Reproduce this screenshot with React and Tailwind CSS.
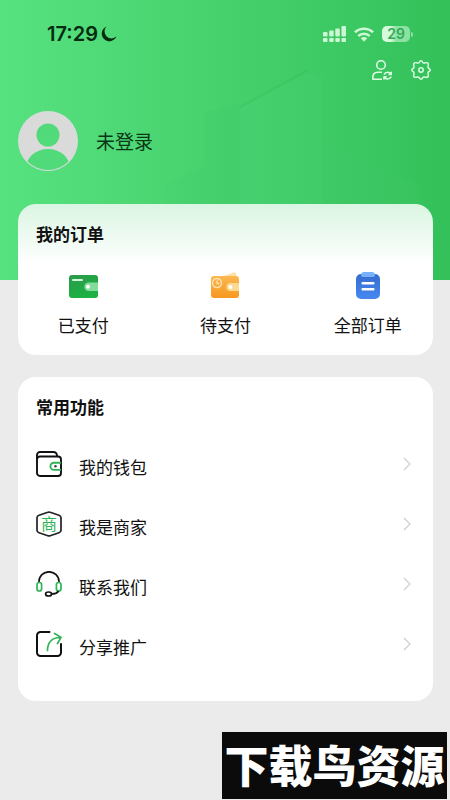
const orders = [
  { label: '已支付', icon: PaidIcon },
  { label: '待支付', icon: UnpaidIcon },
  { label: '全部订单', icon: AllOrdersIcon },
];

const features = [
  { label: '我的钱包', icon: WalletIcon },
  { label: '我是商家', icon: MerchantIcon },
  { label: '联系我们', icon: HeadsetIcon },
  { label: '分享推广', icon: ShareIcon },
];

function PaidIcon() {
  return (
    <svg viewBox="0 0 32 32" className="size-8" aria-hidden="true">
      <defs>
        <linearGradient id="paid" x1="0" y1="0" x2="0.4" y2="1">
          <stop offset="0" stopColor="#2c9a4b" />
          <stop offset="1" stopColor="#1cb142" />
        </linearGradient>
      </defs>
      <rect x="2" y="5" width="29" height="23" rx="3" fill="url(#paid)" />
      <rect x="5" y="9" width="11" height="2" rx="1" fill="#d5f5dd" />
      <path d="M31 12.500H21.500a4.200 4.200 0 0 0 0 8.400H31z" fill="#83dc9a" />
      <circle cx="21" cy="16.700" r="2" fill="#fff" />
    </svg>
  );
}

function UnpaidIcon() {
  return (
    <svg viewBox="0 0 32 32" className="size-8" aria-hidden="true">
      <defs>
        <linearGradient id="unpaid" x1="0" y1="0" x2="0" y2="1">
          <stop offset="0" stopColor="#fbb850" />
          <stop offset="1" stopColor="#f7971f" />
        </linearGradient>
      </defs>
      <path d="M12 7L24.500 2.500q2-.5 2.500 1.200L28 8z" fill="#fde0a6" />
      <rect x="2" y="6" width="28" height="22" rx="3" fill="url(#unpaid)" />
      <circle cx="8" cy="13" r="4.500" fill="none" stroke="#fde3b4" strokeWidth="1.400" />
      <path d="M8 10.500V13.500h2.500" fill="none" stroke="#fde3b4" strokeWidth="1.300" />
      <path d="M30 13H21.500a4 4 0 0 0 0 8H30z" fill="#fdd890" />
      <circle cx="21.500" cy="17" r="2" fill="#fff" />
    </svg>
  );
}

function AllOrdersIcon() {
  return (
    <svg viewBox="0 0 32 32" className="size-8" aria-hidden="true">
      <defs>
        <linearGradient id="all" x1="0" y1="0" x2="0" y2="1">
          <stop offset="0" stopColor="#356dd0" />
          <stop offset="1" stopColor="#4787f2" />
        </linearGradient>
      </defs>
      <rect x="4" y="4" width="24" height="25" rx="5" fill="url(#all)" />
      <path d="M9 5q0-3 3-3h8q3 0 3 3 0 2-2 2H11q-2 0-2-2z" fill="#77b1fa" />
      <rect x="9.500" y="12" width="13" height="2.400" rx="1" fill="#fff" />
      <rect x="9.500" y="18" width="13" height="2.400" rx="1" fill="#fff" />
    </svg>
  );
}

function WalletIcon() {
  return (
    <svg viewBox="0 0 26 26" className="size-[26px]" fill="none" strokeWidth="1.900" aria-hidden="true">
      <rect x="1" y="5.500" width="24" height="19.500" rx="3" stroke="#111" />
      <path d="M1 8.500V4a3 3 0 0 1 3-3H17.500a3.500 3.500 0 0 1 3.500 3.500V5.500" stroke="#111" />
      <path d="M25 11.700H18a3.600 3.600 0 0 0 0 7.200h7" stroke="#2fb457" />
      <circle cx="19.500" cy="15.300" r="1.200" fill="#2a4a33" />
    </svg>
  );
}

function MerchantIcon() {
  return (
    <svg viewBox="0 0 26 26" className="size-[26px]" aria-hidden="true">
      <path
        d="M11.800 1.300q1.200-.5 2.400 0l8.800 2.900q2 .7 2 2.600V19.200q0 1.900-2 2.600l-8.800 2.900q-1.200.5-2.400 0L3 21.800q-2-.7-2-2.600V6.800Q1 4.900 3 4.200z"
        fill="none"
        stroke="#222"
        strokeWidth="1.700"
      />
      <text x="13" y="19" textAnchor="middle" fontSize="16" fill="#2fb457" className="font-['Noto_Sans_CJK_SC',sans-serif]">商</text>
    </svg>
  );
}

function HeadsetIcon() {
  return (
    <svg viewBox="0 0 26 26" className="size-[26px]" fill="none" strokeWidth="1.700" aria-hidden="true">
      <path d="M3 12V10.500a10 9.700 0 0 1 20 0V12" stroke="#111" />
      <rect x="1" y="11.500" width="4.600" height="8.500" rx="2.300" stroke="#2fb457" />
      <rect x="20.400" y="11.500" width="4.600" height="8.500" rx="2.300" stroke="#2fb457" />
      <path d="M22.500 20q-1.500 3-7 3" stroke="#111" />
      <ellipse cx="12.600" cy="23" rx="3" ry="2" stroke="#111" />
    </svg>
  );
}

function ShareIcon() {
  return (
    <svg viewBox="0 0 26 26" className="size-[26px]" fill="none" strokeWidth="2" strokeLinecap="round" aria-hidden="true">
      <path d="M13.500 1H4.500A3.500 3.500 0 0 0 1 4.500v17A3.500 3.500 0 0 0 4.500 25h17a3.500 3.500 0 0 0 3.500-3.500V13" stroke="#111" />
      <path d="M11.500 19.500C11.500 11.500 16 6.500 24 6.500M18.500 2.500L25 6.300 21.500 12.500" stroke="#2fb457" strokeWidth="1.700" />
    </svg>
  );
}

function StatusBar() {
  return (
    <div className="flex h-12 items-end justify-between pr-[37px] pl-[47px] text-[#062b10]">
      <div className="flex h-7 items-center gap-[3px]">
        <span className="font-[Inter,sans-serif] text-[20px] font-semibold">17:29</span>
        <svg viewBox="0 0 16 16" className="size-4" aria-hidden="true">
          <path d="M5.500 .6a7.600 7.600 0 1 0 10 9.700A6.300 6.300 0 0 1 5.500 .6z" fill="currentColor" />
        </svg>
      </div>
      <div className="flex h-7 items-center gap-2 text-[#cdf7d5]">
        <svg viewBox="0 0 23 16" className="h-4 w-[23px]" fill="currentColor" aria-hidden="true">
          <rect x="0" y="6" width="4.500" height="4.500" rx="1" />
          <rect x="6.200" y="4.500" width="4.500" height="6" rx="1" />
          <rect x="12.300" y="2.500" width="4.500" height="8" rx="1" />
          <rect x="18.500" y="0" width="4.500" height="10.500" rx="1" />
          <rect x="0" y="12" width="4.500" height="4" rx="1" />
          <rect x="6.200" y="12" width="4.500" height="4" rx="1" />
          <rect x="12.300" y="12" width="4.500" height="4" rx="1" />
          <rect x="18.500" y="12" width="4.500" height="4" rx="1" />
        </svg>
        <svg viewBox="0 0 20 15" className="h-[15px] w-5" fill="none" stroke="currentColor" strokeWidth="2.600" aria-hidden="true">
          <path d="M1 5.300a13 13 0 0 1 18 0" />
          <path d="M4.300 9a8.200 8.200 0 0 1 11.400 0" />
          <path d="M10 14.800L6.700 11.300a4.800 4.800 0 0 1 6.600 0z" fill="currentColor" stroke="none" />
        </svg>
        <div className="flex items-center gap-px">
          <span className="flex h-4 w-7 items-center justify-center rounded-[5px] bg-linear-to-r from-[#d5fbdc] from-30% to-[#8be3a2] to-50% font-[Inter,sans-serif] text-[14px] font-semibold text-[#35a859]">
            29
          </span>
          <span className="h-[5px] w-0.5 rounded-r bg-[#8be3a2]" />
        </div>
      </div>
    </div>
  );
}

function Toolbar() {
  return (
    <div className="flex h-11 items-center justify-end gap-[19px] pr-[19px] text-[#dcfbe2]">
      <button type="button" aria-label="切换账号">
        <svg viewBox="0 0 20 20" className="size-5" fill="none" stroke="currentColor" strokeWidth="1.600" strokeLinejoin="round" aria-hidden="true">
          <circle cx="9" cy="5" r="4.300" />
          <path d="M10 19.200H.8V17.500c0-3.200 2-5.300 5-5.300H10" />
          <path d="M12 14.500q1.300-2.300 3.700-2.300 1.800 0 3 1.600M19.300 11.800v2.700h-2.800" />
          <path d="M19.300 16.700q-1.300 2.300-3.700 2.300-1.800 0-3-1.600M12 19.500v-2.800h2.800" />
        </svg>
      </button>
      <button type="button" aria-label="设置">
        <svg viewBox="0 0 20 20" className="size-5" fill="none" stroke="currentColor" strokeWidth="1.500" strokeLinejoin="round" aria-hidden="true">
          <path d="M10 .8Q11 .8 11.500 2 12.200 3.400 13.500 3 16 2.200 16.900 3.100 17.800 4 17 6.500 16.600 7.800 18 8.500 19.200 9 19.200 10T18 11.500Q16.600 12.200 17 13.500 17.800 16 16.900 16.900 16 17.800 13.500 17 12.200 16.600 11.500 18 11 19.200 10 19.200T8.500 18Q7.800 16.600 6.500 17 4 17.800 3.100 16.900 2.200 16 3 13.500 3.400 12.200 2 11.500 .8 11 .8 10T2 8.500Q3.400 7.800 3 6.500 2.200 4 3.100 3.100 4 2.200 6.500 3 7.800 3.400 8.500 2 9 .8 10 .8z" />
          <circle cx="10" cy="10" r="2.200" />
        </svg>
      </button>
    </div>
  );
}

function Avatar() {
  return (
    <svg viewBox="0 0 60 60" className="size-[60px]" aria-hidden="true">
      <defs>
        <clipPath id="avatar">
          <circle cx="30" cy="30" r="29" />
        </clipPath>
      </defs>
      <circle cx="30" cy="30" r="30" fill="#dadada" />
      <g clipPath="url(#avatar)" fill="#50da79">
        <circle cx="30" cy="24" r="11.500" />
        <ellipse cx="30" cy="57" rx="22" ry="19" />
      </g>
    </svg>
  );
}

export default function App() {
  return (
    <div className="relative min-h-screen bg-[#ebebeb] pb-[99px] font-['Noto_Sans_CJK_SC',sans-serif] text-[17px] leading-6 text-[#111]">
      <header className="relative h-[280px] bg-linear-to-r from-[#57e280] to-[#33c059]">
        {/* faint shapes behind the profile */}
        <svg viewBox="0 0 450 280" preserveAspectRatio="none" className="absolute inset-0 size-full" aria-hidden="true">
          <path d="M240 108L308 72 322 76V280H240z" fill="#4ed281" opacity=".16" />
          <path d="M205 112L240 104V280H165V185L205 165z" fill="#3fc86f" opacity=".12" />
          <path d="M240 107L308 70" stroke="#2bb45a" strokeWidth="2" opacity=".18" />
          <path d="M322 140L420 185V280H322z" fill="#4ed281" opacity=".1" />
        </svg>
        <div className="relative">
          <StatusBar />
          <Toolbar />
          <div className="mt-[19px] flex items-center gap-[18px] pl-[18px]">
            <Avatar />
            <span className="text-[19px] text-[#0b3517]">未登录</span>
          </div>
        </div>
      </header>

      <main className="relative -mt-[76px] flex flex-col gap-[22px] pr-[17px] pl-[18px]">
        <section className="rounded-[18px] bg-white bg-linear-to-b from-[#daf5e2] to-white to-40% pt-[18px] pb-[18px]">
          <h2 className="pl-[18px] font-bold">我的订单</h2>
          <div className="-mx-1.5 mt-6 grid grid-cols-3">
            {orders.map(({ label, icon: Icon }) => (
              <button key={label} type="button" className="flex flex-col items-center gap-[11px]">
                <Icon />
                <span>{label}</span>
              </button>
            ))}
          </div>
        </section>

        <section className="rounded-[18px] bg-white px-[18px] pt-[18px] pb-[27px]">
          <h2 className="font-bold">常用功能</h2>
          <div className="mt-[15px]">
            {features.map(({ label, icon: Icon }) => (
              <button key={label} type="button" className="flex h-15 w-full items-center gap-[17px] text-left">
                <Icon />
                <span className="flex-1 pt-1.5">{label}</span>
                <svg viewBox="0 0 8 14" className="mr-1 h-3.5 w-2" fill="none" stroke="#cfcfcf" strokeWidth="1.200" aria-hidden="true">
                  <path d="M1 1l6 6-6 6" />
                </svg>
              </button>
            ))}
          </div>
        </section>
      </main>

      <div className="absolute right-[3px] bottom-px flex h-[67px] w-[225px] items-center justify-center bg-[#0b0b0b] pb-1 text-[44px] leading-none font-black whitespace-nowrap text-white">
        下载鸟资源
      </div>
    </div>
  );
}
